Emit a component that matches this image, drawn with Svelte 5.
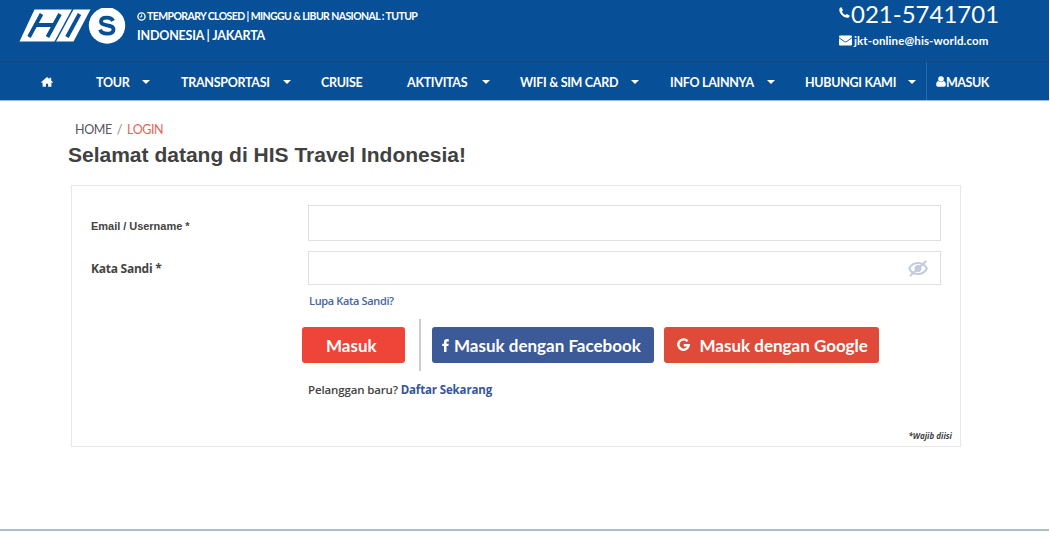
<script>
  const menu = [
    { label: 'TOUR', width: 85, text: 34, caret: true },
    { label: 'TRANSPORTASI', width: 140, text: 90, caret: true },
    { label: 'CRUISE', width: 86, text: 43, caret: false },
    { label: 'AKTIVITAS', width: 113, text: 63, caret: true },
    { label: 'WIFI & SIM CARD', width: 150, text: 99, caret: true },
    { label: 'INFO LAINNYA', width: 135, text: 85, caret: true },
    { label: 'HUBUNGI KAMI', width: 121, text: 91, caret: true }
  ];
</script>

<header>
  <div class="top">
    <svg class="logo" viewBox="0 0 108 36" width="108" height="36" aria-label="HIS">
      <path fill="#fff" d="M15.500 1.500H71.500L54.500 33.500H.500Z" />
      <g fill="none" stroke="#075097" stroke-width="3.800">
        <path d="M22.500 6 10 29M17.500 17H34M41 6 28.500 29M60.500 6 48 29" />
      </g>
      <path d="M54.500 0 35.500 35" stroke="#075097" stroke-width="1.500" />
      <circle cx="88" cy="17.500" r="19.500" fill="#075097" />
      <circle cx="88" cy="17.500" r="18.200" fill="#fff" />
      <path d="M94.100 12.800c-1.200-2.300-3.300-3.200-6.300-3.200-3.500 0-5.800 1.500-5.800 4 0 5.700 12.500 1.900 12.500 7.900 0 2.700-2.600 4.200-6.400 4.200-3.600 0-6.100-1.300-7-4" fill="none" stroke="#075097" stroke-width="3.800" />
    </svg>
    <div class="office">
      <div class="hours">
        <svg viewBox="0 0 10 10" width="9" height="9"><circle cx="5" cy="5" r="4" fill="none" stroke="#fff" stroke-width="1.500" /><path d="M5.200 2.500v3H3" fill="none" stroke="#fff" stroke-width="1.100" /></svg>
        <span>TEMPORARY CLOSED | MINGGU &amp; LIBUR NASIONAL : TUTUP</span>
      </div>
      <div class="city">INDONESIA | JAKARTA</div>
    </div>
    <div class="contact">
      <div class="phone">
        <svg viewBox="0 0 11 11" width="11" height="11"><path fill="#fff" d="M2.500.300 4 3.300 2.900 4.500c.8 1.700 1.900 2.800 3.600 3.600l1.300-1.200 2.900 1.500c0 1.500-1 2.400-2.500 2.400C4.400 10.700.300 6.500.300 2.800.300 1.300 1.100.300 2.500.300Z" /></svg>
        <span>021-5741701</span>
      </div>
      <div class="mail">
        <svg viewBox="0 0 13 11" width="13" height="11"><rect y=".500" width="13" height="10" rx="1" fill="#fff" /><path d="M0 2.700 5.200 6.500q1.300.9 2.600 0L13 2.700" fill="none" stroke="#075097" stroke-width=".9" /></svg>
        <span>jkt-online@his-world.com</span>
      </div>
    </div>
  </div>
  <nav>
    <a class="home" href="#home" aria-label="Home">
      <svg viewBox="0 0 12 10" width="12" height="10"><path fill="#fff" d="M6 0 8.500 2.100V.700h1.700v2.900L12 5.200l-.7.8-.9-.7v4.500H7.100V6.800H4.900v3H1.600V5.300L.700 6 0 5.200Z" /></svg>
    </a>
    {#each menu as item}
      <a href="#menu" class="item" style:width="{item.width}px">
        <span style:width="{item.text}px">{item.label}</span>
        {#if item.caret}<i></i>{/if}
      </a>
    {/each}
    <a class="login" href="#login">
      <svg viewBox="0 0 10 11" width="10" height="11"><circle cx="5" cy="3" r="2.800" fill="#fff" /><path fill="#fff" d="M2.300 4.900Q5 7.300 7.700 4.900 9.800 5.400 9.800 8.700q0 2-1.800 2H2q-1.800 0-1.800-2 0-3.300 2.100-3.800Z" /></svg>
      <span>MASUK</span>
    </a>
  </nav>
</header>

<main>
  <div class="crumb"><span>HOME</span><em>/</em><b>LOGIN</b></div>
  <h1>Selamat datang di HIS Travel Indonesia!</h1>
  <form>
    <label class="email" for="user">Email / Username *</label>
    <input id="user" class="user" type="text" />
    <label class="pass" for="password">Kata Sandi *</label>
    <div class="field">
      <input id="password" type="password" />
      <svg viewBox="0 0 20 17" width="20" height="17" fill="none" stroke="#c3c9df"><path d="M1.200 8.500C3 4.800 6.300 3 10 3s7 1.800 8.800 5.500C17 12.200 13.700 14 10 14S3 12.200 1.200 8.500Z" stroke-width="1.900" /><circle cx="10" cy="8.500" r="3.100" fill="#c3c9df" /><path d="M2 16 18.200 1" stroke-width="2" /></svg>
    </div>
    <div class="actions">
      <a class="forgot" href="#forgot">Lupa Kata Sandi?</a>
      <div class="buttons">
        <button type="button" class="masuk"><span>Masuk</span></button>
        <div class="rule"></div>
        <button type="button" class="facebook">
          <svg viewBox="0 0 7 13" width="7" height="13"><path fill="#fff" d="M2 13V7H.200V4.700H2V3.200C2 1.100 3.100.100 5 .100q1.200 0 1.800.1v2.200H5.600c-.9 0-1.100.4-1.100 1.100v1.200h2.200L6.400 7H4.500v6Z" /></svg>
          <span>Masuk dengan Facebook</span>
        </button>
        <button type="button" class="google">
          <svg viewBox="0 0 13 14" width="13" height="14"><path d="M10.600 3.300A5.200 5.200 0 1 0 11.700 7.300H6.800" fill="none" stroke="#fff" stroke-width="2.400" /></svg>
          <span>Masuk dengan Google</span>
        </button>
      </div>
      <div class="register">Pelanggan baru? <a href="#register">Daftar Sekarang</a></div>
    </div>
    <div class="note">*Wajib diisi</div>
  </form>
</main>
<footer></footer>

<style>
  :global(body) { background: #fff; overflow: hidden; }
  :global(#app) { width: 1049px; height: 539px; display: flex; flex-direction: column; }
  * { box-sizing: border-box; }
  svg { display: block; flex: none; }
  a { text-decoration: none; color: inherit; }
  span, a, .city, h1, label, .register { white-space: nowrap; }
  header { background: #075097; color: #fff; height: 101px; border-bottom: 1px solid #9bbbd6; font-family: Lato, sans-serif; font-weight: 700; }
  .top { height: 62px; border-bottom: 1px solid #174580; display: flex; }
  .logo { margin: 8px 0 0 19px; }
  .office { padding: 9px 0 0 10px; width: 712px; flex: none; }
  .hours { display: flex; align-items: center; gap: 1px; height: 14px; font-size: 10.500px; letter-spacing: -.59px; }
  .city { font-size: 12.500px; line-height: 16px; margin-top: 5px; letter-spacing: -.2px; }
  .phone { display: flex; align-items: center; height: 27px; font-size: 24px; line-height: 27px; font-weight: 400; gap: 1px; }
  .phone svg { margin-top: -2px; }
  .mail { display: flex; align-items: center; gap: 2px; height: 14px; margin-top: 6px; font-size: 11.500px; letter-spacing: .13px; }
  nav { height: 38px; display: flex; font-size: 12.500px; letter-spacing: -.3px; }
  .home { width: 96px; padding: 15px 0 0 41px; }
  .item { display: flex; align-items: center; gap: 12px; padding-top: 2px; }
  .item i { border: 4px solid transparent; border-top-color: #fff; border-bottom: 0; margin-top: -1px; }
  .login { flex: 1; display: flex; align-items: center; border-left: 1px solid #286aa9; padding: 2px 0 0 9px; letter-spacing: -.45px; }
  .login svg { margin-top: -2px; }
  main { height: 428px; padding: 20px 0 0 68px; font-family: "Open Sans", sans-serif; color: #444; }
  .crumb { display: flex; gap: 5px; height: 18px; padding-left: 7px; font: 400 12.500px/18px Lato, sans-serif; letter-spacing: -.4px; color: #5b5560; }
  .crumb em { font-style: normal; color: #888; }
  .crumb b { font-weight: 400; color: #ef6059; }
  h1 { margin: 3px 0 0; font: 700 21px/26px "Liberation Sans", sans-serif; color: #414141; }
  form { width: 890px; height: 262px; margin: 17px 0 0 3px; border: 1px solid #e6e8e9; display: grid; grid-template-columns: 217px 633px; grid-template-rows: 36px 43px 128px 1fr; padding: 19px 0 0 19px; }
  label { font-size: 12px; font-weight: 700; }
  .email { font: 700 11px/14px "Liberation Sans", sans-serif; padding-top: 14px; letter-spacing: -.03px; }
  .pass { padding: 20px 0 0 0; line-height: 16px; letter-spacing: -.25px; }
  input { width: 633px; border: 1px solid #dddfe1; background: #fff; outline: 0; }
  .user { height: 36px; }
  .field { height: 34px; margin-top: 10px; display: flex; align-items: center; }
  .field input { height: 34px; flex: none; }
  .field svg { margin-left: -33px; }
  .actions { grid-column: 2; padding-top: 9px; }
  .forgot { display: block; font-size: 11px; line-height: 16px; font-weight: 600; color: #4964a0; padding-left: 1px; letter-spacing: -.35px; }
  .buttons { display: flex; align-items: center; height: 52px; margin: 10px 0 0 -6px; }
  button { height: 36px; border: 0; border-radius: 3px; padding: 0; color: #fff; font: 700 17px Lato, sans-serif; display: flex; align-items: center; flex: none; }
  .masuk { width: 103px; background: #ef4438; padding-left: 24px; }
  .rule { width: 2px; height: 52px; background: #ccc; margin: 0 11px 0 14px; }
  .facebook { width: 222px; background: #3c5998; padding-left: 10px; gap: 5px; }
  .google { width: 215px; background: #df4b38; margin-left: 9.500px; padding-left: 13px; gap: 10px; }
  .register { font-size: 11.500px; line-height: 16px; font-weight: 600; margin-top: 11px; letter-spacing: -.14px; }
  .register a { color: #35559a; font-weight: 700; }
  .note { grid-column: 1 / 3; text-align: right; font-size: 8px; font-style: italic; font-weight: 700; line-height: 12px; padding-top: 18px; margin-right: -11px; }
  footer { height: 10px; border-top: 2px solid #afbfca; }
</style>
